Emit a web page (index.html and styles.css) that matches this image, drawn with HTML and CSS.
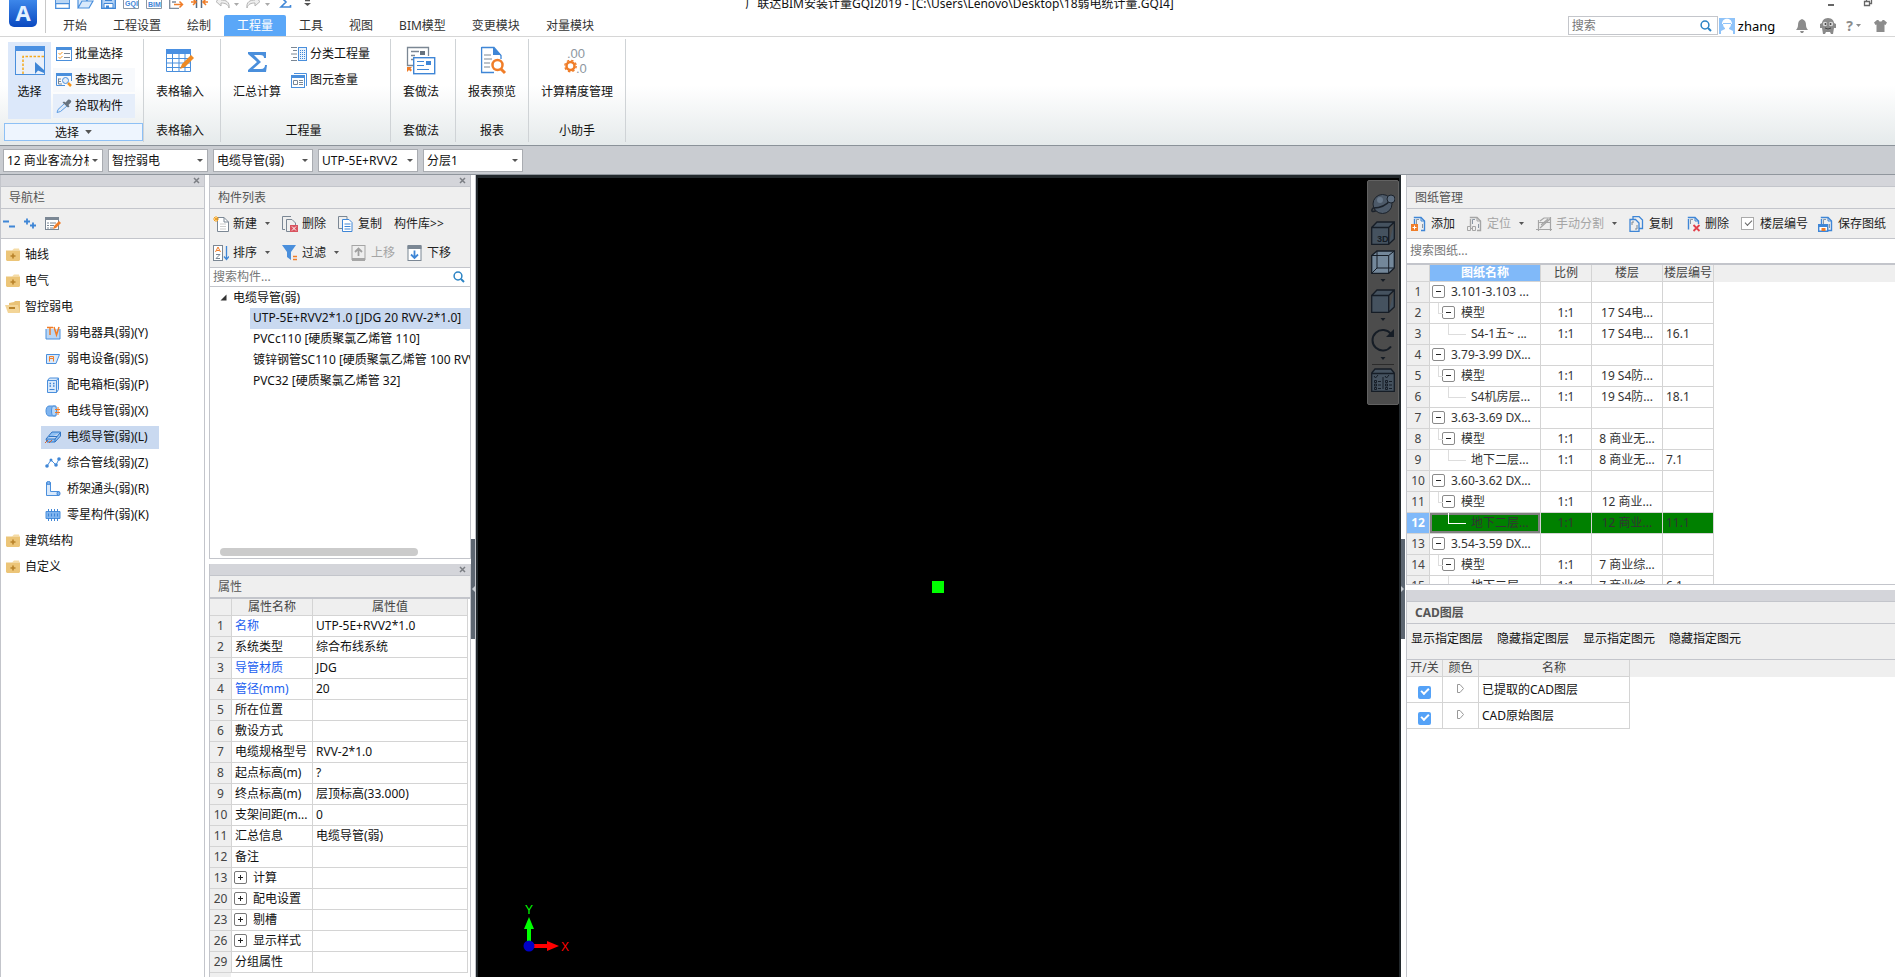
FILE: index.html
```
<!DOCTYPE html>
<html lang="zh-CN">
<head>
<meta charset="utf-8">
<title>广联达BIM安装计量GQI2019</title>
<link rel="stylesheet" href="styles.css">
</head>
<body>
<svg class="defs" aria-hidden="true">
  <symbol id="folder" viewBox="0 0 16 14"><path d="M7 2.500 9 0.500h5l.5 2z" fill="#f5dca6"/><path d="M1 2.500h14V12l-1 1H2l-1-1z" fill="#ecc578"/><path d="M8 5.500v5M5.500 8h5" stroke="#b8822a" stroke-width="1.600"/></symbol>
  <symbol id="folder-open" viewBox="0 0 16 14"><path d="M4 3 9 2l1-1h5v11H4z" fill="#e9c277"/><path d="M0 5h13l2 8H3z" fill="#f3d598"/><path d="M4 8h6" stroke="#b8822a" stroke-width="2"/></symbol>
  <symbol id="plus" viewBox="0 0 13 13"><rect x=".5" y=".5" width="12" height="12" rx="1.500" fill="#fff" stroke="#777"/><path d="M4 6.500h5M6.500 4v5" stroke="#222"/></symbol>
  <symbol id="minus" viewBox="0 0 13 13"><rect x=".5" y=".5" width="12" height="12" rx="1.500" fill="#fff" stroke="#8a8a8a"/><path d="M4 6.500h5" stroke="#222"/></symbol>
  <symbol id="lens" viewBox="0 0 12 12"><circle cx="5" cy="5" r="3.900" fill="none" stroke="#2b83c4" stroke-width="1.500"/><path d="m8 8 3 3" stroke="#2b83c4" stroke-width="2"/></symbol>
  <symbol id="x" viewBox="0 0 7 7"><path d="m1 1 5 5M6 1 1 6" stroke="#7c7f84" stroke-width="1.500"/></symbol>
  <symbol id="sheet" viewBox="0 0 16 16"><path d="M3.500 3v10.500M2.800 1.500H10L13.500 5v9.500H10" fill="none" stroke="currentColor" stroke-width="1.400"/><path d="M10 1.500V5h3.500" fill="none" stroke="currentColor"/><path d="M5.500 8V3.500H8M11.500 8v4" fill="none" stroke="#8b96a3"/></symbol>
  <symbol id="drop" viewBox="0 0 5 3"><path d="M0 0h5L2.500 3z" fill="currentColor"/></symbol>
</svg>

<header class="top">
  <div class="logo" aria-label="应用菜单"><span>A</span></div>
  <div class="top-main">
    <div class="title-row">
      <div class="quick">
        <button aria-label="新建"><svg width="15" height="14" viewBox="0 0 15 14"><path d="M.7 0v12.300h13.600V0M1 7.500h13" fill="none" stroke="#4a8fdc" stroke-width="1.300"/><path d="M1 3h13v4H1z" fill="#b9d6f5"/></svg></button>
        <button aria-label="打开"><svg width="17" height="14" viewBox="0 0 17 14"><path d="M1 12V2h5M1 12l4-7h11l-4 7zM9 5l5-4" fill="#d9e9fb" stroke="#4a8fdc" stroke-width="1.200"/></svg></button>
        <button aria-label="保存"><svg width="15" height="14" viewBox="0 0 15 14"><path d="M.7 0v12.300h13.600V0" fill="#b5d3f5" stroke="#3f86d6" stroke-width="1.300"/><path d="M3 7.500h9V12H3z" fill="#fff" stroke="#3f86d6"/><path d="M4 0h7v5H4zM5 9.500h3V12H5z" fill="#3f86d6"/></svg></button>
        <button aria-label="GQI"><svg width="16" height="14" viewBox="0 0 16 14"><path d="M.5 0v12.500h15V0" fill="none" stroke="#8b98a5"/><text x="2" y="10" class="micro">GQI</text></svg></button>
        <button aria-label="BIM"><svg width="16" height="14" viewBox="0 0 16 14"><path d="M.5 0v12.500h15V0" fill="none" stroke="#8b98a5"/><text x="2" y="11" class="micro">BIM</text></svg></button>
        <button aria-label="IFC"><svg width="15" height="14" viewBox="0 0 15 14"><path d="M.7 0v12.300H10M13 0v4M3 3h7M3 6h4" fill="none" stroke="#7d8b9b" stroke-width="1.300"/><path d="M5 8.500h8M10.500 5.500l3 3-3 3" fill="none" stroke="#f07d28" stroke-width="1.500"/></svg></button>
        <button aria-label="拆分"><svg width="17" height="14" viewBox="0 0 17 14"><path d="M5.500 0v12M10.500 0v12" stroke="#5a6d82" stroke-width="1.500"/><path d="M0 6h4M13 6h4M2 3l3 3-3 3M15 3l-3 3 3 3" fill="none" stroke="#f07d28" stroke-width="1.500"/></svg></button>
        <button class="undo" aria-label="撤销"><svg width="24" height="14" viewBox="0 0 24 14"><path d="M6 1 1 5.500 6 10V7c4 0 7 1 8 5 1-6-3-8-8-8z" fill="#eee" stroke="#b5b5b5"/><path d="M19 7h5l-2.500 3z" fill="#aaa"/></svg></button>
        <button class="redo" aria-label="恢复"><svg width="24" height="14" viewBox="0 0 24 14"><path d="m9 1 5 4.500L9 10V7c-4 0-7 1-8 5-1-6 3-8 8-8z" fill="#eee" stroke="#b5b5b5"/><path d="M19 7h5l-2.500 3z" fill="#aaa"/></svg></button>
        <button class="sum" aria-label="汇总"><svg width="13" height="14" viewBox="0 0 13 14"><path d="M11.500 3V1H2l5 5-5 5h9.500V9" fill="none" stroke="#3f86d6" stroke-width="1.600"/></svg></button>
        <button aria-label="更多"><svg width="7" height="14" viewBox="0 0 7 14"><path d="M1 4.500h5" stroke="#555" stroke-width="1.500"/><path d="M0 7h7l-3.500 3z" fill="#555"/></svg></button>
      </div>
      <div class="title">广联达BIM安装计量GQI2019 - [C:\Users\Lenovo\Desktop\18弱电统计量.GQI4]</div>
      <div class="win">
        <button aria-label="最小化"><svg width="8" height="14" viewBox="0 0 8 14"><path d="M1 9h6" stroke="#666" stroke-width="2"/></svg></button>
        <button aria-label="还原"><svg width="10" height="14" viewBox="0 0 10 14"><path d="M1.500 5.500h5v4h-5zM3.500 5V2.500h5v5H7" fill="none" stroke="#666" stroke-width="1.300"/></svg></button>
      </div>
    </div>
    <div class="tab-row">
      <nav class="tabs">
        <a href="#">开始</a><a href="#">工程设置</a><a href="#">绘制</a><a href="#" class="on">工程量</a><a href="#">工具</a><a href="#">视图</a><a href="#">BIM模型</a><a href="#">变更模块</a><a href="#">对量模块</a>
      </nav>
      <div class="account">
        <label class="find"><input type="text" placeholder="搜索" aria-label="搜索"><svg width="12" height="12"><use href="#lens"/></svg></label>
        <svg class="avatar" width="16" height="16" viewBox="0 0 16 16"><rect width="16" height="16" fill="#8fc3f9"/><path d="M3 6c0-7 10-7 10 0h-1c0 3-2 4-2 4v1l4 2v3H2v-3l4-2v-1S4 9 4 6z" fill="#fff"/><path d="M4 5.500h8" stroke="#8fc3f9"/></svg>
        <span class="user">zhang</span>
        <button class="bell" aria-label="通知"><svg width="12" height="14" viewBox="0 0 12 14"><path d="M6 0c3 1 4 3 4 6 0 2 .5 3 2 5H0c1.500-2 2-3 2-5 0-3 1-5 4-6zM4 12h4l-1 2H5z" fill="#8c8c8c"/></svg></button>
        <button class="bot" aria-label="助手"><svg width="16" height="16" viewBox="0 0 16 16"><path d="M8 0c4 0 6 3 6 5l2 1v4h-2l-1 6h-2l-1-2H6l-1 2H3L2 10H0V6l2-1c0-2 2-5 6-5z" fill="#8a8a8a"/><circle cx="5" cy="6" r="2.200" fill="#d8d8d8"/><circle cx="11" cy="6" r="2.200" fill="#d8d8d8"/><circle cx="5.500" cy="6" r="1" fill="#444"/><circle cx="10.500" cy="6" r="1" fill="#444"/><path d="M5 10q3 2 6 0" stroke="#444" fill="none"/></svg></button>
        <button class="help" aria-label="帮助"><b>?</b><svg width="5" height="3"><use href="#drop"/></svg></button>
        <button aria-label="皮肤"><svg width="13" height="13" viewBox="0 0 13 13"><path d="M3 1h1.500c.5 2 3.500 2 4 0H10l3 2.500L11.500 6 10.500 5.500V13h-8V5.500l-1 .5L0 3.500z" fill="#8c8c8c"/></svg></button>
      </div>
    </div>
  </div>
</header>

<section class="ribbon">
  <div class="group first">
    <div class="tools">
      <button class="big picked"><svg width="30" height="30" viewBox="0 0 30 30"><rect x=".5" y=".5" width="29" height="28" fill="#eaf0fa" stroke="#4a8fdc"/><path d="M0 0h30v5H0z" fill="#4a90e2"/><path d="M8 28V10.500h21" fill="none" stroke="#f5a91d" stroke-width="1.500" stroke-dasharray="2.500 1.500"/><path d="M20 16v12l3-3.500 6 2.500V24z" fill="#3f86d6"/></svg><span>选择</span></button>
      <div class="stack">
        <button><svg width="16" height="14" viewBox="0 0 16 14"><rect x=".5" y=".5" width="15" height="13" fill="#fff" stroke="#4a8fdc"/><path d="M0 0h16v3H0z" fill="#4a8fdc"/><path d="M8 6.500h6M8 10.500h6" stroke="#7b8794"/><path d="m2.500 6 1.500 1.500L6.500 5M2.500 10 4 11.500 6.500 9" fill="none" stroke="#f5951d"/></svg>批量选择</button>
        <button class="soft"><svg width="16" height="14" viewBox="0 0 16 14"><path d="M15.500 8V.5H.5v12H9" fill="none" stroke="#4a8fdc"/><path d="M0 0h16v3H0z" fill="#4a8fdc"/><path d="M2.500 5.500V11M2.500 6H5M2.500 8.500H5M2.500 11H6" stroke="#7b8794"/><circle cx="9.500" cy="7.500" r="3" fill="#e3edf9" stroke="#4a8fdc"/><path d="m12 10 3 3" stroke="#f5951d" stroke-width="2.500"/></svg>查找图元</button>
        <button class="hover"><svg width="16" height="14" viewBox="0 0 16 14"><path d="m8.500 4.500 2.500 2.500-6.500 5.500-3.500 1 1-3z" fill="#dceafa" stroke="#5f9de2"/><path d="m6.500 3.500 1.500-1 1.500 1L12 .8c1.500-1.300 4.300 1 2.800 2.800L12.500 6l1 1.500-1.500 1z" fill="#66727e"/></svg>拾取构件</button>
      </div>
    </div>
    <button class="caption boxed">选择<svg width="7" height="4"><use href="#drop"/></svg></button>
  </div>
  <div class="group">
    <div class="tools"><button class="big"><svg width="30" height="30" viewBox="0 0 30 30"><path d="M1.500 3.500h24v22h-24zM1 12.500h25M1 17h25M1 21.500h25M7.500 3v22M14 3v22M20 3v22" fill="none" stroke="#4a8fdc"/><path d="M1 3h25v5H1z" fill="#4a90e2"/><path d="m15 23 2-5 9-9 3 3-9 9z" fill="#ef8a22"/></svg><span>表格输入</span></button></div>
    <div class="caption">表格输入</div>
  </div>
  <div class="group">
    <div class="tools"><button class="big"><svg width="30" height="30" viewBox="0 0 30 30"><path d="M6 6h18v6h-2c0-2-1-3-4-3h-6l7 7-8 7h8c3 0 4-2 4-4h2l-1 7H6v-2l9-8-9-8z" fill="#4a8fdc"/></svg><span>汇总计算</span></button>
      <div class="stack">
        <button><svg width="16" height="14" viewBox="0 0 16 14"><path d="M0 .5h6M2 3.500h4M0 7h6M2 10.500h4M0 13.500h6" stroke="#7b8794"/><rect x="7.500" y=".5" width="8" height="13" fill="#eaf3fd" stroke="#4a8fdc"/><path d="M9.500 3v9M11.500 3v9M13.500 3v9" stroke="#3f86d6" stroke-dasharray="1 1"/></svg>分类工程量</button>
        <button><svg width="16" height="15" viewBox="0 0 16 15"><path d="M3 .5h12.500V13" fill="none" stroke="#4a8fdc"/><rect x=".5" y="2.500" width="13" height="12" fill="#fff" stroke="#4a8fdc"/><path d="M0 2h14v3H0z" fill="#4a8fdc"/><path d="M2.500 7.500h4v4h-4zM8 7.500h4M8 9.500h4M8 11.500h4" fill="none" stroke="#7b8794"/></svg>图元查量</button>
      </div></div>
    <div class="caption">工程量</div>
  </div>
  <div class="group">
    <div class="tools"><button class="big"><svg width="30" height="30" viewBox="0 0 30 30"><path d="M7 19.500H1.500V1.500h21V10M5 5.500h8M5 9.500h4M5 13.500h2" fill="none" stroke="#7b8794" stroke-width="1.300"/><path d="M14 5h5v4h-5z" fill="#66727e"/><rect x="7.700" y="11.700" width="21" height="16" fill="#fff" stroke="#3f86d6" stroke-width="1.400"/><path d="M11 15.500h7M11 19.500h7M11 23.500h12" stroke="#3f86d6"/><path d="M20 15h5v4h-5z" fill="#3f86d6"/><path d="M1 21h5l-1.500 1.500L6 24l-1.500 1.500L3 24l-2 2z" fill="#f07d28"/></svg><span>套做法</span></button></div>
    <div class="caption">套做法</div>
  </div>
  <div class="group tight">
    <div class="tools"><button class="big"><svg width="30" height="30" viewBox="0 0 30 30"><path d="M4.600 1.500H17l7 8V13M4.600 1v25.500H17" fill="none" stroke="#3f86d6" stroke-width="1.300"/><path d="M16 1v8h8z" fill="#3f86d6"/><path d="M7 9h7M7 13h8M7 17h6M7 21h6" stroke="#7b8794"/><circle cx="20.500" cy="19" r="5" fill="#fff" stroke="#f07d28" stroke-width="2.500"/><path d="m24 23 4 4" stroke="#f07d28" stroke-width="3"/></svg><span>报表预览</span></button></div>
    <div class="caption">报表</div>
  </div>
  <div class="group tight">
    <div class="tools"><button class="big"><svg width="30" height="30" viewBox="0 0 30 30"><text x="5" y="12" class="digits">.00</text><text x="14" y="27" class="digits">.0</text><circle cx="8.500" cy="20" r="4" fill="none" stroke="#f07d28" stroke-width="2.500"/><circle cx="8.500" cy="20" r="5.700" fill="none" stroke="#f07d28" stroke-width="1.400" stroke-dasharray="2.400 2.080"/></svg><span>计算精度管理</span></button></div>
    <div class="caption">小助手</div>
  </div>
</section>

<section class="combos">
  <span class="combo"><select aria-label="楼层"><option>12 商业客流分析</option></select></span>
  <span class="combo"><select aria-label="专业"><option>智控弱电</option></select></span>
  <span class="combo"><select aria-label="构件类型"><option>电缆导管(弱)</option></select></span>
  <span class="combo"><select aria-label="构件"><option>UTP-5E+RVV2</option></select></span>
  <span class="combo"><select aria-label="分层"><option>分层1</option></select></span>
</section>

<main class="work">
  <aside class="panel nav">
    <div class="strip"><button aria-label="关闭"><svg width="7" height="7"><use href="#x"/></svg></button></div>
    <h2>导航栏</h2>
    <div class="nav-tools">
      <button aria-label="折叠"><svg width="13" height="12" viewBox="0 0 13 12"><path d="M0 3.500h6M6 8.500h6" stroke="#3f86d6" stroke-width="2"/></svg></button>
      <button aria-label="展开"><svg width="13" height="12" viewBox="0 0 13 12"><path d="M0 3.500h6M3 .5v6M6 7.500h6M9 4.500v6" stroke="#3f86d6" stroke-width="1.800"/></svg></button>
      <button aria-label="编辑"><svg width="16" height="14" viewBox="0 0 16 14"><rect x=".5" y=".5" width="13" height="12" fill="#fff" stroke="#7b8794"/><path d="M0 0h14v3H0z" fill="#7b8794"/><path d="M2 6h2M5 6h6M2 8.500h2M5 8.500h4M2 11h2M5 11h3" stroke="#7b8794"/><path d="m8 12 1-3 5-5 2 2-5 5z" fill="#f07d28"/></svg></button>
    </div>
    <ul class="tree">
      <li><svg width="16" height="14"><use href="#folder"/></svg>轴线</li>
      <li><svg width="16" height="14"><use href="#folder"/></svg>电气</li>
      <li><svg width="16" height="14"><use href="#folder-open"/></svg>智控弱电</li>
      <li class="kid"><span><svg width="16" height="14" viewBox="0 0 16 14"><path d="M1 3v10h14V3" fill="#b9d6f5" stroke="#4a8fdc"/><path d="M2 1.500h6M5 1.500V9M9 1l2.500 8L14 1" fill="none" stroke="#f07d28" stroke-width="1.500"/></svg>弱电器具(弱)(Y)</span></li>
      <li class="kid"><span><svg width="16" height="14" viewBox="0 0 16 14"><path d="M1.500 2.500h13L11 11.500H1.500z" fill="#d9e9fb" stroke="#4a8fdc"/><path d="M4.500 4.500h4v2h-4zM4.500 6.500h4v3M4.500 6.500v3" fill="none" stroke="#f07d28"/></svg>弱电设备(弱)(S)</span></li>
      <li class="kid"><span><svg width="16" height="16" viewBox="0 0 16 16"><path d="M2.500 3.500 4.500 1h9v11.500l-2 3h-9zM2.500 3.500h9v12M11.500 3.500l2-2.500" fill="#d9e9fb" stroke="#4a8fdc"/><path d="M4.500 6.500h5M4.500 9h5" stroke="#3f86d6" stroke-width="1.500" stroke-dasharray="1.500 2"/><path d="M4.500 12.500h5" stroke="#3f86d6"/></svg>配电箱柜(弱)(P)</span></li>
      <li class="kid"><span><svg width="16" height="14" viewBox="0 0 16 14"><path d="M4 2h7v10H4C0 12 0 2 4 2z" fill="#7fb4ef" stroke="#4a8fdc"/><ellipse cx="9" cy="7" rx="2.500" ry="5" fill="#b9d6f5" stroke="#4a8fdc"/><path d="M10 5.500h5M10 8.500h5M13 3v8" stroke="#f07d28"/></svg>电线导管(弱)(X)</span></li>
      <li class="kid"><span class="sel"><svg width="16" height="14" viewBox="0 0 16 14"><path d="m1 9 6-7h8.500v4L10 12H2zM1 9h9l5-6M10 9v3M4 6.500h8" fill="#8fc0f3" stroke="#2f74c4"/><path d="m0 13 3-3M4 13l3-3" stroke="#d8622b"/></svg>电缆导管(弱)(L)</span></li>
      <li class="kid"><span><svg width="16" height="14" viewBox="0 0 16 14"><path d="m2 10 4-6 5 5 3-6" fill="none" stroke="#4a8fdc"/><circle cx="2" cy="10" r="1.800" fill="#3f86d6"/><circle cx="6" cy="4" r="1.500" fill="#3f86d6"/><circle cx="11" cy="9" r="1.800" fill="#3f86d6"/><circle cx="14" cy="3" r="1.800" fill="#3f86d6"/></svg>综合管线(弱)(Z)</span></li>
      <li class="kid"><span><svg width="16" height="16" viewBox="0 0 16 16"><path d="M1.500 2v12.500H14v-4H5.500V2z" fill="#d9e9fb" stroke="#4a8fdc"/><ellipse cx="3.500" cy="2" rx="2" ry="1.500" fill="#7fb4ef" stroke="#3f86d6"/><ellipse cx="13.500" cy="12.500" rx="1.500" ry="2" fill="#7fb4ef" stroke="#3f86d6"/></svg>桥架通头(弱)(R)</span></li>
      <li class="kid"><span><svg width="16" height="14" viewBox="0 0 16 14"><path d="M1 3.500h14v7H1z" fill="#7fb4ef" stroke="#4a8fdc"/><path d="M3.500 1v12M6.500 1v12M9.500 1v12M12.500 1v12" stroke="#3f86d6" stroke-dasharray="3 1.500"/></svg>零星构件(弱)(K)</span></li>
      <li><svg width="16" height="14"><use href="#folder"/></svg>建筑结构</li>
      <li><svg width="16" height="14"><use href="#folder"/></svg>自定义</li>
    </ul>
  </aside>

  <div class="column parts">
    <section class="panel list">
      <div class="strip"><button aria-label="关闭"><svg width="7" height="7"><use href="#x"/></svg></button></div>
      <h2>构件列表</h2>
      <div class="bars">
        <div class="bar">
          <button><svg width="16" height="16" viewBox="0 0 16 16"><path d="M4.500 15.500v-14H11L15.500 6v9.500z" fill="#fff" stroke="#7b8794"/><path d="M11 1.500V6h4.500" fill="none" stroke="#7b8794"/><path d="M7 8h6M7 10.500h6M7 13h6" stroke="#ccc"/><path d="M0 3h6M3 0v6M1 1l4 4M5 1 1 5" stroke="#f5a21d"/></svg>新建<svg class="dd" width="5" height="3"><use href="#drop"/></svg></button>
          <button><svg width="16" height="16" viewBox="0 0 16 16"><path d="M3 13.500H.5V.5H9M4.500 15.500v-12H10l3.500 3.500v2M4.500 15.500H8" fill="none" stroke="#7b8794"/><path d="M8 9h8v7H8z" fill="#d9535f"/><path d="m10 10.500 4 4M14 10.500l-4 4" stroke="#fff"/></svg>删除</button>
          <button><svg width="16" height="16" viewBox="0 0 16 16"><path d="M4 12.500H.5V.5H9V3" fill="none" stroke="#7b8794"/><path d="M4.500 3.500H11l3 3v9H4.500z" fill="#fff" stroke="#3f86d6"/><path d="M6.500 8h6M6.500 10.500h6M6.500 13h6" stroke="#3f86d6"/></svg>复制</button>
          <button>构件库&gt;&gt;</button>
        </div>
        <div class="bar">
          <button><svg width="16" height="16" viewBox="0 0 16 16"><rect x=".5" y=".5" width="9" height="15" fill="#fff" stroke="#7b8794"/><path d="m2.500 7 2.500-5 2.500 5M3.500 5.500h3" fill="none" stroke="#f07d28"/><path d="M3 9.500h4l-4 4h4" fill="none" stroke="#7b8794"/><path d="M13.500 1v13M11 11.500l2.500 3 2.500-3" fill="none" stroke="#3f86d6" stroke-width="1.300"/></svg>排序<svg class="dd" width="5" height="3"><use href="#drop"/></svg></button>
          <button><svg width="16" height="16" viewBox="0 0 16 16"><path d="M0 0h14L9 7v8l-4-3V7z" fill="#4a8fdc"/><path d="M11 11.500h4M11 14.500h4" stroke="#f07d28" stroke-width="1.300"/></svg>过滤<svg class="dd" width="5" height="3"><use href="#drop"/></svg></button>
          <button disabled><svg width="16" height="16" viewBox="0 0 16 16"><rect x="1" y=".5" width="13" height="14" fill="#eee" stroke="#a5a5a5"/><path d="M1 13h13v3H1z" fill="#a5a5a5"/><path d="M7.500 11V4M4 7l3.500-3.500L11 7" fill="none" stroke="#a0a0a0" stroke-width="1.800"/></svg>上移</button>
          <button><svg width="16" height="16" viewBox="0 0 16 16"><rect x="1" y="1.500" width="13" height="14" fill="#fff" stroke="#7b8794"/><path d="M.5 0h14v4H.5z" fill="#7b8794"/><path d="M7.500 5.500V13M4 9.500 7.500 13 11 9.500" fill="none" stroke="#3f86d6" stroke-width="1.800"/></svg>下移</button>
        </div>
      </div>
      <label class="search"><input type="text" placeholder="搜索构件..." aria-label="搜索构件"><svg width="12" height="12"><use href="#lens"/></svg></label>
      <ul class="items">
        <li class="root"><svg width="7" height="7" viewBox="0 0 7 7"><path d="M6.500.5v6h-6z" fill="#333"/></svg>电缆导管(弱)</li>
        <li class="sel">UTP-5E+RVV2*1.0 [JDG 20 RVV-2*1.0]</li>
        <li>PVCc110 [硬质聚氯乙烯管 110]</li>
        <li>镀锌钢管SC110 [硬质聚氯乙烯管 100 RVV]</li>
        <li>PVC32 [硬质聚氯乙烯管 32]</li>
      </ul>
      <div class="hscroll"></div>
    </section>
    <section class="panel props">
      <div class="strip"><button aria-label="关闭"><svg width="7" height="7"><use href="#x"/></svg></button></div>
      <h2>属性</h2>
      <div class="props-body">
      <table class="grid">
        <colgroup><col class="p0"><col class="p1"><col class="p2"></colgroup>
        <thead><tr><th></th><th>属性名称</th><th>属性值</th></tr></thead>
        <tbody>
          <tr><th>1</th><td class="key">名称</td><td>UTP-5E+RVV2*1.0</td></tr>
          <tr><th>2</th><td>系统类型</td><td>综合布线系统</td></tr>
          <tr><th>3</th><td class="key">导管材质</td><td>JDG</td></tr>
          <tr><th>4</th><td class="key">管径(mm)</td><td>20</td></tr>
          <tr><th>5</th><td>所在位置</td><td></td></tr>
          <tr><th>6</th><td>敷设方式</td><td></td></tr>
          <tr><th>7</th><td>电缆规格型号</td><td>RVV-2*1.0</td></tr>
          <tr><th>8</th><td>起点标高(m)</td><td>?</td></tr>
          <tr><th>9</th><td>终点标高(m)</td><td>层顶标高(33.000)</td></tr>
          <tr><th>10</th><td>支架间距(m...</td><td>0</td></tr>
          <tr><th>11</th><td>汇总信息</td><td>电缆导管(弱)</td></tr>
          <tr><th>12</th><td>备注</td><td></td></tr>
          <tr><th>13</th><td class="fold"><svg width="13" height="13"><use href="#plus"/></svg>计算</td><td></td></tr>
          <tr><th>20</th><td class="fold"><svg width="13" height="13"><use href="#plus"/></svg>配电设置</td><td></td></tr>
          <tr><th>23</th><td class="fold"><svg width="13" height="13"><use href="#plus"/></svg>剔槽</td><td></td></tr>
          <tr><th>26</th><td class="fold"><svg width="13" height="13"><use href="#plus"/></svg>显示样式</td><td></td></tr>
          <tr><th>29</th><td>分组属性</td><td></td></tr>
        </tbody>
      </table>
      </div>
    </section>
  </div>

  <div class="split left"><i><svg width="3" height="6" viewBox="0 0 3 6"><path d="M3 0v6L0 3z" fill="#c9ced4"/></svg></i></div>

  <section class="view">
    <span class="point"></span>
    <svg class="axes" width="60" height="60" viewBox="0 0 60 60">
      <path d="M13 42V24" stroke="#0f0" stroke-width="4"/><path d="M8 28 13 16l5 12z" fill="#0f0"/>
      <path d="M13 45h20" stroke="#f00" stroke-width="4"/><path d="m31 40 12 5-12 5z" fill="#f00"/>
      <circle cx="13" cy="45" r="5.500" fill="#0000c8"/>
      <text x="13" y="13" text-anchor="middle" fill="#0f0">Y</text><text x="49" y="50" text-anchor="middle" fill="#f00">X</text>
    </svg>
    <div class="floating">
      <button aria-label="动态观察"><svg width="24" height="24" viewBox="0 0 24 24"><path d="M3 15c-4 4-2 6 3 3M3 17c7 0 13-4 17-9" fill="none" stroke="#1b222b" stroke-width="1.500"/><circle cx="11.500" cy="12" r="9.500" fill="#4d5a69" stroke="#1b222b"/><path d="M2.500 16c6 0 13-3 17-8" fill="none" stroke="#1b222b" stroke-width="1.500"/><circle cx="9" cy="8" r="3" fill="#68788a"/><circle cx="20" cy="7" r="4" fill="#5e6e80" stroke="#1b222b"/></svg></button>
      <button aria-label="三维"><svg width="24" height="24" viewBox="0 0 24 24"><path d="M.7 6.500h17v16.800H.7zM.7 6.500 6 1h17.300l-5.600 5.500M23.300 1v17l-5.600 5.300" fill="#45525f" stroke="#161d26" stroke-width="1.300"/><text x="6" y="21" class="cube">3D</text></svg></button>
      <button aria-label="线框"><svg width="24" height="24" viewBox="0 0 24 24"><path d="M.7 5.500 6 1h17.300v17l-5.600 5.300H.7z" fill="#73879a" stroke="#161d26" stroke-width="1.300"/><path d="M.7 5.500h17v17.800M17.700 5.500 23.300 1M6 1v17h17M6 18 1 23" fill="none" stroke="#161d26"/></svg></button>
      <svg class="more" width="6" height="3"><use href="#drop"/></svg>
      <button aria-label="实体"><svg width="24" height="24" viewBox="0 0 24 24"><path d="M.7 6.500h17v16.800H.7zM.7 6.500 6 1h17.300l-5.600 5.500M23.300 1v17l-5.600 5.300" fill="#45525f" stroke="#161d26" stroke-width="1.300"/></svg></button>
      <svg class="more" width="6" height="3"><use href="#drop"/></svg>
      <button aria-label="旋转"><svg width="24" height="24" viewBox="0 0 24 24"><path d="M20 18.500A10.300 10.300 0 1 1 20 6" fill="none" stroke="#161d26" stroke-width="2"/><path d="M23 1v8h-8z" fill="#161d26"/></svg></button>
      <svg class="more" width="6" height="3"><use href="#drop"/></svg>
      <hr>
      <button aria-label="显示设置"><svg width="24" height="24" viewBox="0 0 24 24"><path d="M.7 5.500h22.600v17.800H.7zM.7 5 4 1h16l3.300 4" fill="#45525f" stroke="#161d26" stroke-width="1.300"/><path d="M12 9v12M7 13.500h3M7 17h3M7 20.500h3M18 13.500h3M18 17h3M18 20.500h3" stroke="#161d26"/><path d="M3.500 12.500h2v2h-2zM3.500 16h2v2h-2zM3.500 19.500h2v2h-2zM14.500 12.500h2v2h-2zM14.500 16h2v2h-2zM14.500 19.500h2v2h-2zM3 8l1.500 2L7 7M14 8l1.500 2L18 7" fill="none" stroke="#161d26"/></svg></button>
    </div>
  </section>

  <div class="split right"><i><svg width="3" height="6" viewBox="0 0 3 6"><path d="M0 0v6l3-3z" fill="#c9ced4"/></svg></i></div>

  <div class="column right-col">
    <section class="panel sheets">
      <div class="strip"></div>
      <h2>图纸管理</h2>
      <div class="bars">
        <div class="bar sheetbar">
          <button><svg width="16" height="16" class="blue"><use href="#sheet"/><path d="M0 8h7v7H0z" fill="#f07d28"/><path d="M1.500 11.500h4M3.500 9.500v4" stroke="#fff"/></svg>添加</button>
          <button disabled><svg width="16" height="16"><use href="#sheet"/><path d="M.5 10.500h3v4h-3zM5.500 10.500h3v4h-3zM3 12.500h3" fill="#eee" stroke="#a5a5a5"/></svg>定位<svg class="dd" width="5" height="3"><use href="#drop"/></svg></button>
          <button disabled><svg width="16" height="16" viewBox="0 0 16 16"><path d="M2.500 6.500h12v7h-12zM0 13.500h16M2.500 4v11M14.500 1v14M4 5l4-3h6M4 12 14 3M5 9l7-6" fill="none" stroke="#a5a5a5" stroke-width="1.200"/></svg>手动分割<svg class="dd" width="5" height="3"><use href="#drop"/></svg></button>
          <button><svg width="16" height="16" viewBox="0 0 16 16"><path d="M4 3.500v-3h6L13.500 4v8.500H10M1 3.500h5.500L10 7v8.500H1z" fill="none" stroke="#3f86d6" stroke-width="1.300"/><path d="M3 9V6h2M8 9v4H6" fill="none" stroke="#7b8794"/></svg>复制</button>
          <button><svg width="16" height="16" class="blue"><use href="#sheet"/><path d="M7 8h8v8H7z" fill="#f1f1f1"/><path d="m8.500 9 6 6M14.500 9l-6 6" stroke="#e2414c" stroke-width="1.800"/></svg>删除</button>
          <label class="tick"><input type="checkbox" checked>楼层编号</label>
          <button class="save"><svg width="16" height="16" class="blue"><use href="#sheet"/><path d="M.7 8.700h9v6.600h-9z" fill="#fff" stroke="#3f86d6" stroke-width="1.400"/><path d="M1 8h9v3H1z" fill="#3f86d6"/><path d="M3.500 12h4v3h-4z" fill="#f07d28"/></svg>保存图纸</button>
        </div>
      </div>
      <label class="search"><input type="text" placeholder="搜索图纸..." aria-label="搜索图纸"></label>
      <div class="sheets-body">
      <table class="grid draw">
        <colgroup><col class="s0"><col class="s1"><col class="s2"><col class="s3"><col class="s4"></colgroup>
        <thead><tr><th></th><th class="hot">图纸名称</th><th>比例</th><th>楼层</th><th>楼层编号</th></tr></thead>
        <tbody>
          <tr><th>1</th><td class="l0"><svg width="13" height="13"><use href="#minus"/></svg>3.101-3.103 ...</td><td></td><td></td><td></td></tr>
          <tr><th>2</th><td class="l1"><svg width="13" height="13"><use href="#minus"/></svg>模型</td><td>1:1</td><td>17 S4电...</td><td></td></tr>
          <tr><th>3</th><td class="l2">S4-1五~ ...</td><td>1:1</td><td>17 S4电...</td><td>16.1</td></tr>
          <tr><th>4</th><td class="l0"><svg width="13" height="13"><use href="#minus"/></svg>3.79-3.99 DX...</td><td></td><td></td><td></td></tr>
          <tr><th>5</th><td class="l1"><svg width="13" height="13"><use href="#minus"/></svg>模型</td><td>1:1</td><td>19 S4防...</td><td></td></tr>
          <tr><th>6</th><td class="l2">S4机房层...</td><td>1:1</td><td>19 S4防...</td><td>18.1</td></tr>
          <tr><th>7</th><td class="l0"><svg width="13" height="13"><use href="#minus"/></svg>3.63-3.69 DX...</td><td></td><td></td><td></td></tr>
          <tr><th>8</th><td class="l1"><svg width="13" height="13"><use href="#minus"/></svg>模型</td><td>1:1</td><td>8 商业无...</td><td></td></tr>
          <tr><th>9</th><td class="l2">地下二层...</td><td>1:1</td><td>8 商业无...</td><td>7.1</td></tr>
          <tr><th>10</th><td class="l0"><svg width="13" height="13"><use href="#minus"/></svg>3.60-3.62 DX...</td><td></td><td></td><td></td></tr>
          <tr><th>11</th><td class="l1"><svg width="13" height="13"><use href="#minus"/></svg>模型</td><td>1:1</td><td>12 商业...</td><td></td></tr>
          <tr class="current"><th>12</th><td class="l2">地下二层...</td><td>1:1</td><td>12 商业...</td><td>11.1</td></tr>
          <tr><th>13</th><td class="l0"><svg width="13" height="13"><use href="#minus"/></svg>3.54-3.59 DX...</td><td></td><td></td><td></td></tr>
          <tr><th>14</th><td class="l1"><svg width="13" height="13"><use href="#minus"/></svg>模型</td><td>1:1</td><td>7 商业综...</td><td></td></tr>
          <tr><th>15</th><td class="l2">地下二层...</td><td>1:1</td><td>7 商业综...</td><td>6.1</td></tr>
        </tbody>
      </table>
      </div>
    </section>
    <section class="panel cad">
      <div class="strip"></div>
      <h2><b>CAD图层</b></h2>
      <div class="cad-tools"><button>显示指定图层</button><button>隐藏指定图层</button><button>显示指定图元</button><button>隐藏指定图元</button></div>
      <div class="cad-body">
      <table class="grid layers">
        <colgroup><col class="c0"><col class="c0"><col class="c2"></colgroup>
        <thead><tr><th>开/关</th><th>颜色</th><th>名称</th></tr></thead>
        <tbody>
          <tr><td><input type="checkbox" checked aria-label="已提取的CAD图层"></td><td><svg width="7" height="9" viewBox="0 0 7 9"><path d="M.5.5H3L6.500 4.500 3 8.500H.5z" fill="none" stroke="#999"/></svg></td><td>已提取的CAD图层</td></tr>
          <tr><td><input type="checkbox" checked aria-label="CAD原始图层"></td><td><svg width="7" height="9" viewBox="0 0 7 9"><path d="M.5.5H3L6.500 4.500 3 8.500H.5z" fill="none" stroke="#999"/></svg></td><td>CAD原始图层</td></tr>
        </tbody>
      </table>
      </div>
    </section>
  </div>
</main>
</body>
</html>
```

FILE: styles.css
```
* { box-sizing: border-box; }

body {
  margin: 0;
  height: 100vh;
  display: flex;
  flex-direction: column;
  overflow: hidden;
  background: #fff;
  color: #111;
  font: 12px/16px "Noto Sans", "Noto Sans CJK SC", sans-serif;
}

button, input, select { font: inherit; color: inherit; margin: 0; }
button {
  display: inline-flex;
  align-items: center;
  padding: 0;
  border: 0;
  background: none;
  white-space: nowrap;
}
svg { display: block; flex: none; }
ul { list-style: none; margin: 0; padding: 0; }
a { color: inherit; text-decoration: none; }
.defs { position: absolute; width: 0; height: 0; }

/* title, tabs, account */
.top { display: flex; flex: none; height: 37px; border-bottom: 1px solid #d6d6d6; }
.logo {
  width: 46px;
  height: 33px;
  padding: 0 8px 6px 9px;
  border-right: 1px solid #c8c8c8;
}
.logo span {
  display: block;
  height: 27px;
  border-radius: 0 0 5px 5px;
  background: linear-gradient(#3d87ea, #0a49c0);
  color: #e4f0ff;
  font-weight: bold;
  font-size: 22px;
  line-height: 24px;
  text-align: center;
}
.top-main { flex: 1; min-width: 0; display: flex; flex-direction: column; }
.title-row {
  display: grid;
  grid-template-columns: 1fr auto 1fr;
  height: 20px;
  margin-top: -4px;
  padding-right: 22px;
}
.title { line-height: 16px; height: 16px; white-space: nowrap; color: #111; }
.quick { display: flex; height: 14px; gap: 7px; padding-left: 9px; }
.quick .sum { margin: 0 5px 0 2px; }
.win { display: flex; height: 14px; justify-content: flex-end; gap: 28px; }
.micro { font: bold 7px "Liberation Sans", sans-serif; fill: #3f86d6; }

.tab-row { display: flex; justify-content: space-between; height: 21px; }
.tabs { display: flex; padding-left: 4px; }
.tabs a { padding: 3px 13px 2px; color: #333; white-space: nowrap; }
.tabs .on { background: #5aa7f8; color: #fff; border-radius: 2px 2px 0 0; }
.account { display: flex; align-items: center; padding-right: 8px; color: #8c8c8c; }
.find {
  display: flex;
  align-items: center;
  width: 150px;
  height: 19px;
  padding: 0 5px 0 3px;
  border: 1px solid #c4c6cb;
}
.find input, .search input {
  flex: 1;
  min-width: 0;
  border: 0;
  padding: 0;
  outline: 0;
  background: none;
}
input::placeholder { color: #777; opacity: 1; }
.avatar { margin: 0 3px 0 1px; }
.user { color: #000; font-size: 13px; margin-right: 21px; }
.bell { margin-right: 12px; }
.bot { margin-right: 10px; }
.help { margin-right: 13px; gap: 3px; }
.help b { font-size: 14px; }

/* ribbon */
.ribbon {
  display: flex;
  flex: none;
  height: 109px;
  padding: 2px 0 3px;
  background: linear-gradient(#fff 45%, #e5eaeb);
  border-bottom: 1px solid #8b9299;
}
.group {
  display: flex;
  flex-direction: column;
  justify-content: space-between;
  padding: 3px 16px 1px 12px;
  border-right: 1px solid #cfd3d6;
}
.group.tight { padding-right: 12px; }
.tools { display: flex; gap: 10px; }
.big { flex-direction: column; height: 77px; padding-top: 4px; gap: 8px; }
.group.first { padding: 3px 0 1px 4px; }
.first .tools { gap: 2px; padding: 0 8px 0 4px; }
.first .big { width: 43px; }
.picked { background: #dce8fa; }
.stack { display: flex; flex-direction: column; gap: 2px; }
.stack button { height: 24px; gap: 3px; padding: 0 12px 0 3px; }
.group:not(.first) .stack button { padding: 0 4px 0 0; }
.soft { background: #f7f9fc; }
.hover { background: #e6eefa; }
.caption { text-align: center; padding-bottom: 2px; line-height: 17px; }
.boxed {
  justify-content: center;
  gap: 6px;
  height: 18px;
  padding: 0;
  border: 1px solid #8dc0f5;
  background: #eef5fe;
}
.boxed svg { color: #555; }
.digits { font: 13px "Liberation Sans", sans-serif; fill: #8d979f; }

/* drop-down row */
.combos {
  display: flex;
  flex: none;
  gap: 5px;
  height: 29px;
  padding: 3px;
  background: #c9ccd1;
  border-bottom: 1px solid #90969d;
}
.combo { position: relative; width: 100px; height: 23px; }
.combo::after {
  content: "";
  position: absolute;
  right: 5px;
  top: 10px;
  border: 3px solid transparent;
  border-top-color: #555;
  border-bottom: 0;
}
.combo select {
  appearance: none;
  width: 100%;
  height: 100%;
  padding: 0 13px 0 3px;
  border: 1px solid #a9acb1;
  border-radius: 0;
  background: #fff;
}

/* panels */
.work { flex: 1; min-height: 0; display: flex; }
.panel {
  display: flex;
  flex-direction: column;
  min-height: 0;
  border: 1px solid #c3c5cb;
  border-top: 0;
  background: #fff;
  overflow: hidden;
}
.strip {
  flex: none;
  display: flex;
  justify-content: flex-end;
  align-items: center;
  height: 12px;
  padding-right: 4px;
  background: #d4d5da;
  border-bottom: 1px solid #c3c5cb;
}
.panel h2 {
  flex: none;
  margin: 0;
  padding: 3px 8px 2px;
  font-size: 12px;
  font-weight: normal;
  color: #555;
  background: #efefef;
  border-bottom: 1px solid #c3c5cb;
}
.column { display: flex; flex-direction: column; gap: 5px; flex: none; }

.nav { width: 205px; flex: none; border-bottom: 0; }
.nav-tools {
  display: flex;
  align-items: center;
  gap: 8px;
  flex: none;
  height: 30px;
  padding-left: 2px;
  background: #efefef;
  border-bottom: 1px solid #c3c5cb;
}
.tree { padding-top: 3px; }
.tree li {
  display: flex;
  align-items: center;
  gap: 4px;
  height: 26px;
  padding-left: 4px;
}
.tree .kid { padding-left: 40px; }
.kid span {
  display: flex;
  align-items: center;
  gap: 6px;
  width: 118px;
  height: 23px;
  padding-left: 4px;
}
.kid .sel, .items .sel { background: #c9d9f0; }

.parts { width: 262px; margin-left: 4px; }
.list { flex: 383 1 0; }
.props { flex: 414 1 0; border-bottom: 0; }
.bars { flex: none; background: #efefef; border-bottom: 1px solid #c3c5cb; color: #222; }
.bar { display: flex; align-items: center; gap: 12px; height: 29px; padding-left: 3px; }
.bar button { gap: 4px; }
.bar button .dd { margin-left: 4px; color: #555; }
.bar button:disabled { color: #a5a5a5; }
.bar .blue { color: #3f86d6; }
.search {
  flex: none;
  display: flex;
  align-items: center;
  height: 19px;
  padding: 0 5px 0 3px;
  border-bottom: 1px solid #c3c5cb;
}
.items { flex: 1; min-height: 0; overflow: hidden; }
.items li { height: 21px; margin-left: 40px; padding: 2px 0 0 3px; white-space: nowrap; }
.items .root { display: flex; align-items: center; gap: 6px; margin-left: 7px; padding: 0 0 0 3px; }
.hscroll { flex: none; width: 198px; height: 8px; margin: 0 0 2px 10px; border-radius: 4px; background: #cbcbcb; }

/* tables */
.grid { table-layout: fixed; border-collapse: separate; border-spacing: 0; }
.grid th, .grid td {
  height: 21px;
  padding: 0 0 0 3px;
  border: solid #d4d4d4;
  border-width: 0 1px 1px 0;
  white-space: nowrap;
  overflow: hidden;
  text-align: left;
  background: #fff;
}
.grid th { padding: 0; text-align: center; font-weight: normal; color: #444; background: #efefef; }
.grid thead th { height: 17px; line-height: 16px; }
.grid svg { display: inline-block; vertical-align: -2px; }

.props-body {
  flex: 1;
  border-top: 1px solid #c3c5cb;
  background: linear-gradient(90deg, #efefef 21px, #fff 21px);
}
.props .grid { width: 258px; }
.p0 { width: 22px; }
.p1 { width: 81px; }
.grid .key { color: #1c5ff0; }
.grid .fold { padding-left: 2px; }
.fold svg { margin-right: 6px; }

.split { flex: none; width: 5px; background: #fff; padding-top: 26px; display: flex; align-items: center; }
.split i { display: flex; align-items: center; width: 4px; height: 100px; background: #5d6671; }
.split.left { border-right: 1px solid #c3c5cb; }
.split.left i { justify-content: flex-end; }

/* drawing area */
.view {
  flex: 1;
  position: relative;
  min-width: 0;
  background: #000;
  border: solid #22282c;
  border-width: 3px 2px 0;
}
.point { position: absolute; left: 50%; top: 51%; width: 12px; height: 12px; margin: -4px 0 0 -7px; background: #0f0; }
.axes { position: absolute; left: 38px; bottom: 16px; font: 12px "Liberation Sans", sans-serif; }
.floating {
  position: absolute;
  top: 2px;
  right: 0;
  display: flex;
  flex-direction: column;
  align-items: center;
  gap: 5px;
  width: 32px;
  padding: 11px 0 12px;
  border: 1px solid #626262;
  border-radius: 2px;
  background: #4c4c4c;
}
.floating .more { color: #161d26; margin-bottom: 2px; }
.floating hr { width: 22px; margin: -3px 0 -2px; border: 0; border-top: 1px solid #2b2b2b; }
.cube { font: bold 9px "Liberation Sans", sans-serif; fill: #161d26; }

/* right column */
.right-col { width: 489px; }
.sheets { flex: 410 1 0; border-right: 0; }
.cad { flex: 387 1 0; border-right: 0; border-bottom: 0; }
.sheetbar { padding-left: 4px; }
.sheetbar .save { margin-left: -2px; }
.sheets .search { height: 25px; }
.tick { display: flex; align-items: center; gap: 6px; white-space: nowrap; }
.tick input, .layers input {
  appearance: none;
  width: 13px;
  height: 13px;
  border: 1px solid #aaa;
  background: #fff;
  position: relative;
}
.tick input::after, .layers input::after {
  content: "";
  position: absolute;
  left: 3px;
  top: 2px;
  width: 6px;
  height: 3px;
  border: solid #666;
  border-width: 0 0 1px 1px;
  transform: rotate(-45deg);
}
.sheets-body, .cad-body {
  flex: 1;
  min-height: 0;
  overflow: hidden;
  border-top: 1px solid #c3c5cb;
  background: linear-gradient(#efefef 17px, #fff 17px);
}
.draw { width: 307px; color: #333; }
.s0 { width: 23px; }
.s1 { width: 111px; }
.s2, .s4 { width: 51px; }
.s3 { width: 71px; }
.grid .hot { background: #80b9f9; color: #fff; font-weight: bold; }
.draw td:nth-child(3), .draw td:nth-child(4) { text-align: center; padding: 0; }
.draw svg { margin-right: 6px; }
.draw .l0 { padding-left: 2px; }
.draw .l1 { padding-left: 12px; position: relative; }
.draw .l2 { padding-left: 41px; position: relative; }
.l1::before, .l2::before {
  content: "";
  position: absolute;
  left: 8px;
  top: -2px;
  width: 4px;
  height: 12px;
  border: solid #ddd;
  border-width: 0 0 1px 1px;
}
.l2::before { left: 18px; width: 17px; }
.current .l2::before { border-color: #fff; }
.grid .current td { background: #008000; }
.grid .current th { background: #80b9f9; color: #fff; font-weight: bold; }
.current .l2 { box-shadow: inset 0 0 0 2px #808080; }

.cad-tools {
  flex: none;
  display: flex;
  align-items: center;
  gap: 14px;
  height: 35px;
  padding: 0 0 6px 4px;
  background: #efefef;
}
.layers { width: 223px; }
.c0 { width: 36px; }
.layers tbody td { height: 26px; }
.layers tbody td:nth-child(-n+2) { text-align: center; padding: 0; }
.layers svg { vertical-align: 1px; }
.layers input { border: 0; border-radius: 2px; background: #55a2f7; vertical-align: -6px; }
.layers input::after { border-color: #fff; border-width: 0 0 2px 2px; }
```
